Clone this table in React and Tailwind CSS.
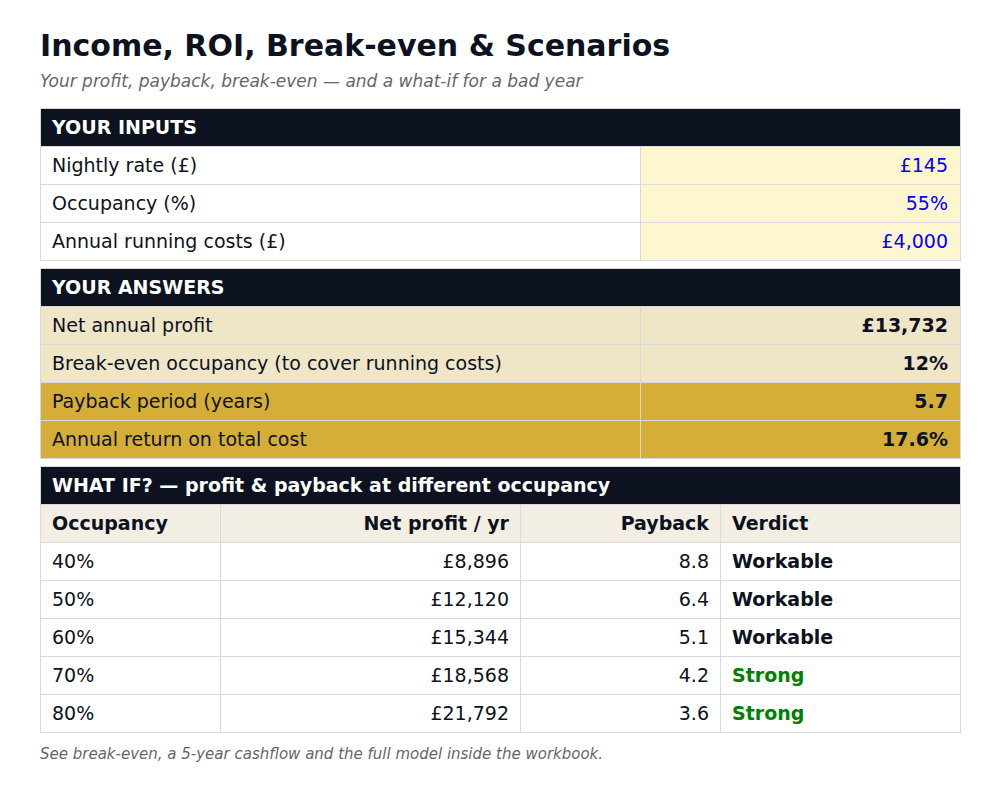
import React from "react";

const F = { fontFamily: '"DejaVu Sans", Verdana, sans-serif' };

function Header({ children }) {
  return (
    <div className="h-[37px] bg-[#0c1220] text-white font-bold text-[19px] flex items-center px-[11px]">
      {children}
    </div>
  );
}

function Row2({ label, value, rowBg, valBg, valCls }) {
  return (
    <div className={`flex h-[38px] border-t border-[#d9d9d9] ${rowBg}`}>
      <div className="w-[599px] flex items-center px-[11px] text-[19px] text-[#0c1220]">{label}</div>
      <div className={`flex-1 border-l border-[#d9d9d9] flex items-center justify-end px-[12px] text-[19px] ${valBg} ${valCls}`}>
        {value}
      </div>
    </div>
  );
}

const scen = [
  ["40%", "£8,896", "8.8", "Workable"],
  ["50%", "£12,120", "6.4", "Workable"],
  ["60%", "£15,344", "5.1", "Workable"],
  ["70%", "£18,568", "4.2", "Strong"],
  ["80%", "£21,792", "3.6", "Strong"],
];

export default function App() {
  return (
    <div style={F} className="w-[1000px] h-[800px] bg-white pl-[40px] pt-[27px] text-[#0c1220]">
      <div className="w-[921px]">
        <h1 className="text-[30px] font-bold leading-[38px] text-[#0c1220]">Income, ROI, Break-even &amp; Scenarios</h1>
        <p className="italic text-[17px] text-[#666666] leading-[20px] mt-[6px]">
          Your profit, payback, break-even — and a what-if for a bad year
        </p>

        <div className="mt-[17px] border border-[#d9d9d9]">
          <Header>YOUR INPUTS</Header>
          <Row2 label="Nightly rate (£)" value="£145" rowBg="bg-white" valBg="bg-[#fdf6cf]" valCls="text-[#0000ff]" />
          <Row2 label="Occupancy (%)" value="55%" rowBg="bg-white" valBg="bg-[#fdf6cf]" valCls="text-[#0000ff]" />
          <Row2 label="Annual running costs (£)" value="£4,000" rowBg="bg-white" valBg="bg-[#fdf6cf]" valCls="text-[#0000ff]" />
        </div>

        <div className="mt-[7px] border border-[#d9d9d9]">
          <Header>YOUR ANSWERS</Header>
          <Row2 label="Net annual profit" value="£13,732" rowBg="bg-[#efe5c7]" valBg="" valCls="font-bold" />
          <Row2 label="Break-even occupancy (to cover running costs)" value="12%" rowBg="bg-[#efe5c7]" valBg="" valCls="font-bold" />
          <Row2 label="Payback period (years)" value="5.7" rowBg="bg-[#d4ae37]" valBg="" valCls="font-bold" />
          <Row2 label="Annual return on total cost" value="17.6%" rowBg="bg-[#d4ae37]" valBg="" valCls="font-bold" />
        </div>

        <div className="mt-[7px] border border-[#d9d9d9]">
          <Header>WHAT IF? — profit &amp; payback at different occupancy</Header>
          <div className="flex h-[38px] border-t border-[#d9d9d9] bg-[#f2eee3] font-bold text-[19px]">
            <div className="w-[179px] flex items-center px-[11px]">Occupancy</div>
            <div className="w-[300px] border-l border-[#d9d9d9] flex items-center justify-end px-[11px]">Net profit / yr</div>
            <div className="w-[200px] border-l border-[#d9d9d9] flex items-center justify-end px-[11px]">Payback</div>
            <div className="flex-1 border-l border-[#d9d9d9] flex items-center px-[11px]">Verdict</div>
          </div>
          {scen.map(([o, p, pb, v]) => (
            <div key={o} className="flex h-[38px] border-t border-[#d9d9d9] bg-white text-[19px]">
              <div className="w-[179px] flex items-center px-[11px]">{o}</div>
              <div className="w-[300px] border-l border-[#d9d9d9] flex items-center justify-end px-[11px]">{p}</div>
              <div className="w-[200px] border-l border-[#d9d9d9] flex items-center justify-end px-[11px]">{pb}</div>
              <div className={`flex-1 border-l border-[#d9d9d9] flex items-center px-[11px] font-bold ${v === "Strong" ? "text-[#008000]" : "text-[#0c1220]"}`}>{v}</div>
            </div>
          ))}
        </div>

        <p className="italic text-[15px] text-[#666666] mt-[12px] leading-[18px]">
          See break-even, a 5-year cashflow and the full model inside the workbook.
        </p>
      </div>
    </div>
  );
}
